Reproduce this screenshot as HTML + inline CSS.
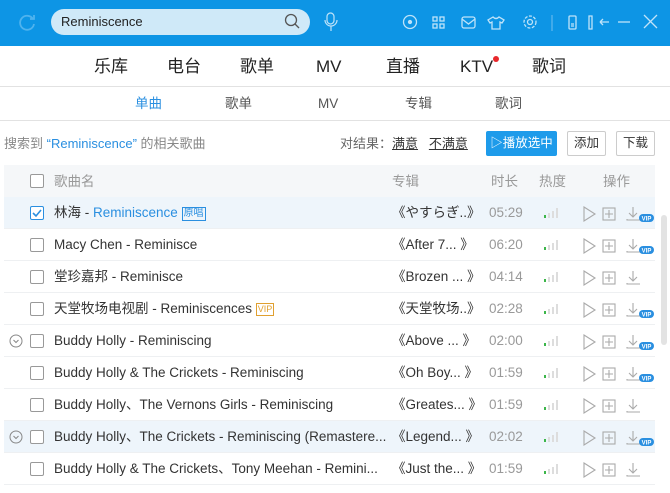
<!DOCTYPE html>
<html><head><meta charset="utf-8"><style>
*{margin:0;padding:0;box-sizing:border-box}
body{width:670px;height:493px;overflow:hidden;background:#fff;font-family:"Liberation Sans","Noto Sans CJK SC",sans-serif;position:relative;color:#333}
.hdr{position:absolute;left:0;top:0;width:670px;height:46px;background:#0d95e5}
.search{position:absolute;left:51px;top:9px;width:259px;height:26px;border-radius:13px;background:#cfe9f8;font-size:13px;line-height:14px;color:#222;padding:6px 10px}
.ab{position:absolute}
.nav{position:absolute;top:57px;font-size:17px;line-height:20px;height:20px;color:#222}
.sub{position:absolute;top:96px;font-size:13.5px;line-height:16px;height:16px;color:#555}
.hl{position:absolute;left:0;width:670px;height:1px;background:#e2e2e2}
.info{position:absolute;top:136px;font-size:13px;line-height:16px;color:#888}
.btn{position:absolute;top:131px;height:25px;border:1px solid #ccc;border-radius:2px;font-size:12.5px;color:#333;text-align:center;line-height:23px}
.th{position:absolute;left:4px;top:165px;width:651px;height:32px;background:#f5f7f9}
.row{position:absolute;left:4px;width:651px;height:32px;border-bottom:1px solid #eef0f2}
.row.sel{background:#eef5fb}
.cb{position:absolute;left:26px;top:9px;width:14px;height:14px;border:1px solid #999;border-radius:2px;background:#fff}
.t{position:absolute;top:8px;font-size:13.5px;line-height:16px;height:16px;color:#333;white-space:nowrap}
.t span{line-height:16px;vertical-align:top}
.al{left:388px}
.du{left:485px;color:#999}
.bars{position:absolute;left:540px;top:11px}
.ops{position:absolute;left:578px;top:8px}
.sb{position:absolute;left:661px;top:215px;width:6px;height:130px;background:#e3e3e3;border-radius:3px}
</style></head><body>
<div class="hdr">
<svg class="ab" style="left:16px;top:11px" width="22" height="22" viewBox="0 0 22 22"><path d="M17 8A7 7 0 1 0 18 13" fill="none" stroke="#4fb3ee" stroke-width="1.8"/><path d="M14 8h4V4" fill="none" stroke="#4fb3ee" stroke-width="1.8"/></svg>
<div class="search">Reminiscence</div>
<svg class="ab" style="left:284px;top:13px" width="16" height="16"><circle cx="7" cy="7" r="5.5" fill="none" stroke="#555" stroke-width="1.3"/><path d="M11 11l4 4" stroke="#555" stroke-width="1.3"/></svg>
<svg class="ab" style="left:323px;top:11px" width="16" height="24" fill="none" stroke="#bfe3f9" stroke-width="1.2"><rect x="4" y="2" width="7" height="11" rx="3.5"/><path d="M2 9a6 6 0 0 0 12 0M8 15v5"/></svg>
<svg class="ab" style="left:400px;top:12px" width="265" height="22" fill="none" stroke="#bfe3f9" stroke-width="1.3">
<circle cx="10" cy="10" r="6.5"/><circle cx="10" cy="10" r="1.5" fill="#bfe3f9"/>
<rect x="33" y="5" width="4" height="4"/><rect x="40" y="5" width="4" height="4"/><rect x="33" y="12" width="4" height="4"/><rect x="40" y="12" width="4" height="4"/>
<rect x="62" y="5" width="13" height="11" rx="2"/><path d="M62 7l6.5 5 6.5-5"/>
<path d="M93 5l-5 3 2 3 2-1v7h8v-7l2 1 2-3-5-3q-3 3-6 0z"/>
<circle cx="130" cy="10" r="2.5"/><circle cx="130" cy="10" r="6" stroke-dasharray="3 1.5"/>
<path d="M152 3v16" stroke="#5bb5ec"/>
<rect x="169" y="4" width="7" height="13" rx="1"/><path d="M171 12h3M171 14h3"/>
<path d="M192 4v13h-3V4zM200 10h9M200 10l3-3M200 10l3 3"/>
<path d="M218 10h12"/>
<path d="M244 3l13 13M257 3l-13 13"/>
</svg>
</div>
<div class="nav" style="left:94px">乐库</div>
<div class="nav" style="left:167px">电台</div>
<div class="nav" style="left:240px">歌单</div>
<div class="nav" style="left:316px">MV</div>
<div class="nav" style="left:386px">直播</div>
<div class="nav" style="left:460px">KTV</div>
<div class="ab" style="left:493px;top:56px;width:6px;height:6px;border-radius:50%;background:#e8282c"></div>
<div class="nav" style="left:532px">歌词</div>
<div class="hl" style="top:86px"></div>
<div class="sub" style="left:135px;color:#2a8fe0">单曲</div>
<div class="sub" style="left:225px">歌单</div>
<div class="sub" style="left:318px">MV</div>
<div class="sub" style="left:405px">专辑</div>
<div class="sub" style="left:495px">歌词</div>
<div class="hl" style="top:120px"></div>
<div class="info" style="left:4px">搜索到 <span style="color:#2a8fe0">“Reminiscence”</span> 的相关歌曲</div>
<div class="info" style="left:340px;color:#666">对结果：<u style="color:#333">满意</u>&nbsp;&nbsp; <u style="color:#333">不满意</u></div>
<div class="btn" style="left:486px;width:71px;background:#1e9bea;border-color:#1e9bea;color:#fff">▷播放选中</div>
<div class="btn" style="left:567px;width:39px">添加</div>
<div class="btn" style="left:616px;width:39px">下载</div>
<div class="th"><div class="cb" style="top:9px"></div>
<div class="t" style="left:50px;top:9px;color:#999">歌曲名</div><div class="t al" style="top:9px;color:#999">专辑</div><div class="t" style="left:487px;top:9px;color:#999">时长</div><div class="t" style="left:535px;top:9px;color:#999">热度</div><div class="t" style="left:599px;top:9px;color:#999">操作</div></div>
<div class="sb"></div>

<div class="row sel" style="top:197px"><div class="cb" style="border-color:#2a8fe0"><svg width="12" height="12" style="position:absolute;left:0;top:0"><path d="M2 6l3 3 5-6" fill="none" stroke="#2a8fe0" stroke-width="1.6"/></svg></div><div class="t" style="left:50px">林海 - <span style="color:#2a8fe0">Reminiscence</span> <span style="font-size:10px;line-height:12px;margin-top:2px;display:inline-block;color:#2a8fe0;border:1px solid #2a8fe0;padding:0 1px">原唱</span></div><div class="t al">《やすらぎ..》</div><div class="t du">05:29</div>BARS</div>
<div class="row" style="top:229px"><div class="cb"></div><div class="t" style="left:50px">Macy Chen - Reminisce</div><div class="t al">《After 7... 》</div><div class="t du">06:20</div>BARS</div>
<div class="row" style="top:261px"><div class="cb"></div><div class="t" style="left:50px">堂珍嘉邦 - Reminisce</div><div class="t al">《Brozen ... 》</div><div class="t du">04:14</div>BARS</div>
<div class="row" style="top:293px"><div class="cb"></div><div class="t" style="left:50px">天堂牧场电视剧 - Reminiscences <span style="font-size:9px;line-height:11px;margin-top:2px;display:inline-block;color:#e0a030;border:1px solid #e0a030;padding:0 1px">VIP</span></div><div class="t al">《天堂牧场..》</div><div class="t du">02:28</div>BARS</div>
<div class="row" style="top:325px">EXP<div class="cb"></div><div class="t" style="left:50px">Buddy Holly - Reminiscing</div><div class="t al">《Above ... 》</div><div class="t du">02:00</div>BARS</div>
<div class="row" style="top:357px"><div class="cb"></div><div class="t" style="left:50px">Buddy Holly &amp; The Crickets - Reminiscing</div><div class="t al">《Oh Boy... 》</div><div class="t du">01:59</div>BARS</div>
<div class="row" style="top:389px"><div class="cb"></div><div class="t" style="left:50px">Buddy Holly、The Vernons Girls - Reminiscing</div><div class="t al">《Greates... 》</div><div class="t du">01:59</div>BARS</div>
<div class="row sel" style="top:421px">EXP<div class="cb"></div><div class="t" style="left:50px;width:335px;overflow:hidden">Buddy Holly、The Crickets - Reminiscing (Remastere...</div><div class="t al">《Legend... 》</div><div class="t du">02:02</div>BARS</div>
<div class="row" style="top:453px"><div class="cb"></div><div class="t" style="left:50px;width:335px;overflow:hidden">Buddy Holly &amp; The Crickets、Tony Meehan - Remini...</div><div class="t al">《Just the... 》</div><div class="t du">01:59</div>BARS</div>
<script>
var vip=[1,1,0,1,1,1,0,1,0];
document.querySelectorAll('.row').forEach(function(r,i){
r.innerHTML=r.innerHTML.replace('EXP','<svg style="position:absolute;left:5px;top:9px" width="14" height="14" fill="none" stroke="#888" stroke-width="1"><circle cx="7" cy="7" r="6"/><path d="M4.5 6l2.5 2.5L9.5 6"/></svg>').replace('BARS','<svg class="bars" width="16" height="10"><rect x="0" y="7" width="2" height="3" fill="#3cb64a"/><rect x="4" y="5" width="2" height="5" fill="#ddd"/><rect x="8" y="3" width="2" height="7" fill="#ddd"/><rect x="12" y="0" width="2" height="10" fill="#ddd"/></svg><svg class="ops" width="76" height="18" fill="none" stroke="#aaa" stroke-width="1.1"><path d="M2 2l11 7-11 7z"/><rect x="21" y="3" width="12" height="12"/><path d="M27 5v8M23 9h8"/><path d="M51 2v10M47 8l4 4 4-4M45 14v1h13"/>'+(vip[i]?'<rect x="57" y="9" width="15" height="8" rx="4" fill="#2a8fe0" stroke="none"/><text x="64.5" y="15.5" font-size="6" fill="#fff" stroke="none" text-anchor="middle" font-weight="bold">VIP</text>':'')+'</svg>');
});
</script>
</body></html>
